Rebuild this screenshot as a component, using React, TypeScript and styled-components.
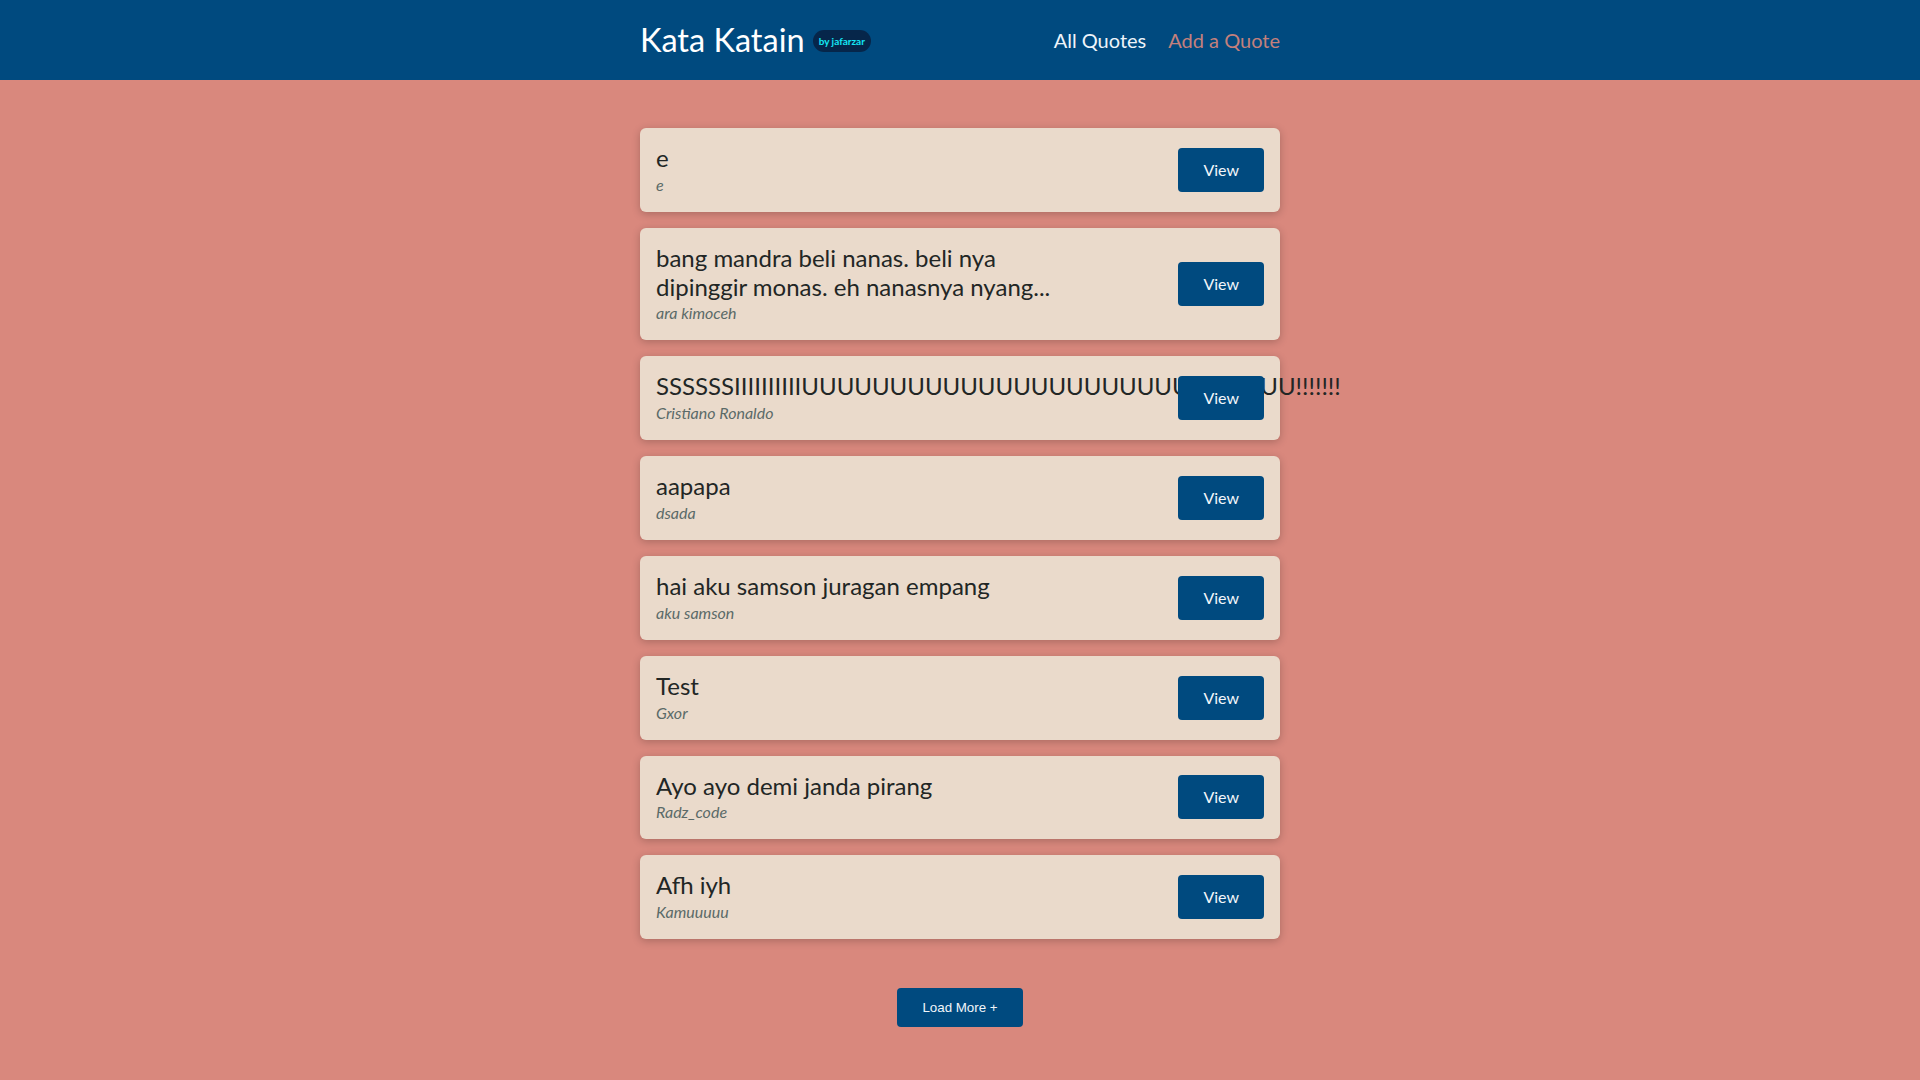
import React from 'react';
import styled, { createGlobalStyle } from 'styled-components';

const GlobalStyle = createGlobalStyle`
  html, body {
    margin: 0;
    padding: 0;
    background-color: #d9887d;
    font-family: 'Lato', 'Noto Sans', sans-serif;
  }
  * {
    box-sizing: border-box;
  }
`;

const Header = styled.header`
  background-color: #004a7f;
  height: 80px;
  display: flex;
  justify-content: center;
`;

const HeaderInner = styled.div`
  width: 640px;
  display: flex;
  align-items: center;
  justify-content: space-between;
`;

const Brand = styled.div`
  display: flex;
  align-items: center;
  gap: 8px;
`;

const Logo = styled.h1`
  margin: 0;
  font-size: 32.5px;
  font-weight: 400;
  color: #ffffff;
  line-height: 1;
`;

const Badge = styled.span`
  background-color: #06264a;
  color: #14e6f5;
  font-size: 10px;
  font-weight: 700;
  padding: 0 6px;
  height: 22px;
  line-height: 22px;
  border-radius: 11px;
  margin-top: 2px;
`;

const Nav = styled.nav`
  display: flex;
  gap: 22px;
`;

const NavLink = styled.a<{ $active?: boolean }>`
  font-size: 20px;
  color: ${(p) => (p.$active ? '#eef4fa' : '#c4807c')};
  text-decoration: none;
  cursor: pointer;
`;

const Main = styled.main`
  display: flex;
  flex-direction: column;
  align-items: center;
  padding: 48px 0 51px;
`;

const List = styled.ul`
  list-style: none;
  margin: 0;
  padding: 0;
  width: 640px;
  display: flex;
  flex-direction: column;
  gap: 16px;
`;

const Card = styled.li`
  background-color: #eadacb;
  border-radius: 6px;
  box-shadow: 0 2px 8px rgba(0, 0, 0, 0.22);
  padding: 16px;
  display: flex;
  align-items: center;
  justify-content: space-between;
`;

const QuoteBody = styled.figure`
  margin: 0;
  max-width: 420px;
`;

const QuoteText = styled.blockquote`
  margin: 0;
  font-size: 24px;
  line-height: 1.2;
  color: #222625;
`;

const Author = styled.figcaption`
  font-size: 16px;
  line-height: 23px;
  font-style: italic;
  color: #5b6a68;
`;

const ViewButton = styled.a`
  flex-shrink: 0;
  background-color: #004a7f;
  color: #f2f6fa;
  font-size: 16px;
  line-height: 20px;
  padding: 12px 25px;
  border-radius: 4px;
  text-decoration: none;
  cursor: pointer;
`;

const LoadMore = styled.button`
  margin-top: 49px;
  background-color: #004a7f;
  color: #f2f6fa;
  border: none;
  border-radius: 4px;
  font-family: 'Liberation Sans', Arial, sans-serif;
  font-size: 13.33px;
  padding: 12px 25px;
  cursor: pointer;
`;

const quotes = [
  { text: 'e', author: 'e' },
  {
    text: 'bang mandra beli nanas. beli nya dipinggir monas. eh nanasnya nyang...',
    author: 'ara kimoceh',
  },
  {
    text: 'SSSSSSIIIIIIIIIIUUUUUUUUUUUUUUUUUUUUUUUUUUUU!!!!!!!',
    author: 'Cristiano Ronaldo',
  },
  { text: 'aapapa', author: 'dsada' },
  { text: 'hai aku samson juragan empang', author: 'aku samson' },
  { text: 'Test', author: 'Gxor' },
  { text: 'Ayo ayo demi janda pirang', author: 'Radz_code' },
  { text: 'Afh iyh', author: 'Kamuuuuu' },
];

export default function App() {
  return (
    <>
      <GlobalStyle />
      <Header>
        <HeaderInner>
          <Brand>
            <Logo>Kata Katain</Logo>
            <Badge>by jafarzar</Badge>
          </Brand>
          <Nav>
            <NavLink $active>All Quotes</NavLink>
            <NavLink>Add a Quote</NavLink>
          </Nav>
        </HeaderInner>
      </Header>
      <Main>
        <List>
          {quotes.map((q, i) => (
            <Card key={i}>
              <QuoteBody>
                <QuoteText>{q.text}</QuoteText>
                <Author>{q.author}</Author>
              </QuoteBody>
              <ViewButton>View</ViewButton>
            </Card>
          ))}
        </List>
        <LoadMore>Load More +</LoadMore>
      </Main>
    </>
  );
}
